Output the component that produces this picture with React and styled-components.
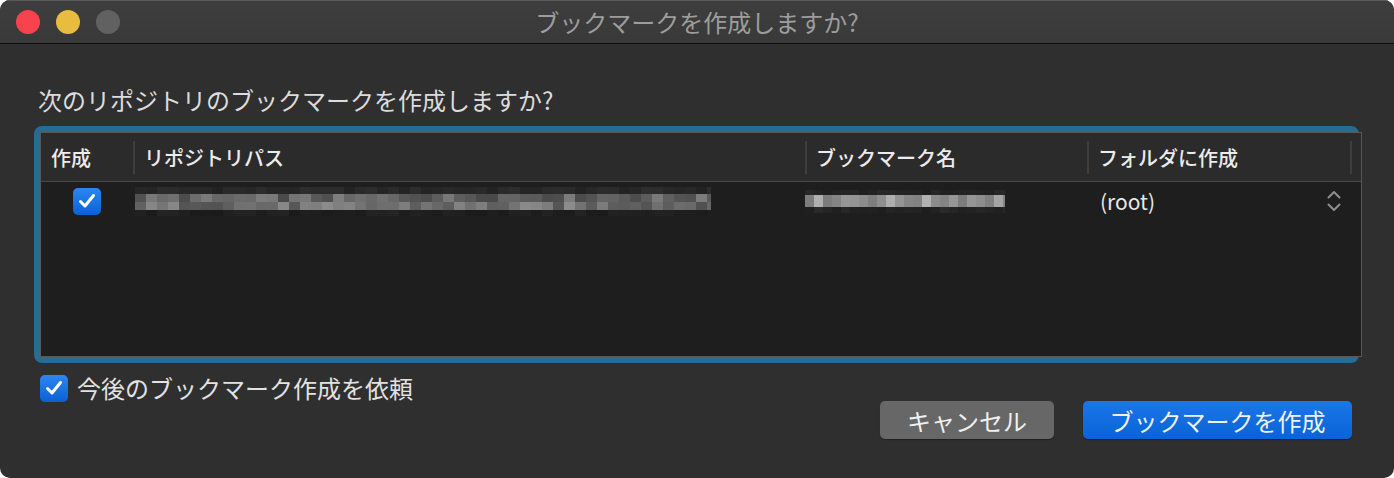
import React from "react";
import styled, { createGlobalStyle } from "styled-components";

const Global = createGlobalStyle`
  html, body { margin: 0; padding: 0; background: #ffffff; }
  body { font-family: "Noto Sans CJK JP", "Noto Sans", sans-serif; }
`;

const Window = styled.div`
  width: 1394px;
  height: 478px;
  border-radius: 10px;
  overflow: hidden;
  background: #2f2f2f;
  display: flex;
  flex-direction: column;
  box-sizing: border-box;
`;

const TitleBar = styled.div`
  height: 43px;
  flex: none;
  display: grid;
  grid-template-columns: 1fr auto 1fr;
  align-items: center;
  background: linear-gradient(#3e3e3e, #393939);
  border-bottom: 1px solid #0c0c0c;
  box-shadow: inset 0 1px 0 #5a5a5a;
`;

const Lights = styled.div`
  display: flex;
  gap: 16px;
  padding-left: 16px;
`;

const Light = styled.span`
  width: 24px;
  height: 24px;
  border-radius: 50%;
  background: ${(p) => p.color};
`;

const Title = styled.div`
  font-size: 24px;
  line-height: 43px;
  color: #9d9d9d;
`;

const Content = styled.div`
  padding: 42px 35px 0 34px;
  display: flex;
  flex-direction: column;
`;

const Prompt = styled.div`
  font-size: 24px;
  line-height: 28px;
  color: #dcdcdc;
  padding-left: 4px;
`;

const Frame = styled.div`
  margin-top: 12px;
  height: 237px;
  box-sizing: border-box;
  border: 6px solid #286b94;
  border-radius: 8px;
  display: flex;
`;

const Table = styled.div`
  flex: 1;
  border: 1px solid #575757;
  background: #1e1e1e;
  display: flex;
  flex-direction: column;
`;

const cols = "92px 672px 282px 263px 1fr";

const HeaderRow = styled.div`
  display: grid;
  grid-template-columns: ${cols};
  align-items: center;
  height: 48px;
  background: #2b2b2b;
  border-bottom: 1px solid #484848;
`;

const HeaderCell = styled.div`
  height: 33px;
  line-height: 33px;
  font-size: 20px;
  font-weight: 500;
  color: #ececec;
  padding-left: ${(p) => (p.first ? "10px" : "9px")};
  border-left: ${(p) => (p.first ? "none" : "2px solid #3e3e3e")};
  white-space: nowrap;
`;

const Row = styled.div`
  display: grid;
  grid-template-columns: ${cols};
  align-items: center;
  height: 38px;
`;

const Cell = styled.div`
  display: flex;
  align-items: center;
  justify-content: ${(p) => p.justify || "flex-start"};
  padding-left: ${(p) => p.pad || "0px"};
  padding-right: ${(p) => p.padRight || "0px"};
`;

const Box = styled.span`
  width: 28px;
  height: 27px;
  border-radius: 5px;
  background: linear-gradient(#2d86f6, #0a62d2);
  display: flex;
  align-items: center;
  justify-content: center;
  flex: none;
`;

const Folder = styled.div`
  flex: 1;
  display: flex;
  align-items: center;
  justify-content: space-between;
  font-size: 21px;
  color: #e8e8e8;
`;

const Footer = styled.div`
  margin-top: 11px;
  display: flex;
  justify-content: space-between;
  align-items: flex-start;
`;

const Remember = styled.label`
  display: flex;
  align-items: center;
  gap: 9px;
  padding-left: 6px;
  font-size: 24px;
  color: #e2e2e2;
  line-height: 28px;
`;

const Buttons = styled.div`
  margin-top: 27px;
  margin-right: 7px;
  display: flex;
  gap: 29px;
`;

const Button = styled.button`
  height: 38px;
  width: ${(p) => p.w}px;
  border: none;
  border-radius: 5px;
  font-family: inherit;
  font-size: 24px;
  padding: 0;
  color: #f0f0f0;
  background: ${(p) =>
    p.primary ? "linear-gradient(#1c76ea, #0863d6)" : "#676767"};
  box-shadow: 0 1px 1px rgba(0, 0, 0, 0.35);
`;

function Check() {
  return (
    <Box>
      <svg width="18" height="16" viewBox="0 0 18 16">
        <path
          d="M2.5 8.5 L7 13 L15.5 2.5"
          fill="none"
          stroke="#ffffff"
          strokeWidth="3"
          strokeLinecap="round"
          strokeLinejoin="round"
        />
      </svg>
    </Box>
  );
}

function rand(seed) {
  const x = Math.sin(seed * 12.9898 + 78.233) * 43758.5453;
  return x - Math.floor(x);
}

// pixelated (blurred) text
function Mosaic({ width, seed, rows, cw = 10 }) {
  const n = Math.ceil(width / cw);
  let y = 0;
  const rects = [];
  rows.forEach(([h, lo, hi], r) => {
    for (let i = 0; i < n; i++) {
      const v = Math.round(lo + (hi - lo) * rand(seed + r * 101 + i));
      rects.push(
        <rect
          key={r + "-" + i}
          x={i * cw}
          y={y}
          width={cw}
          height={h}
          fill={`rgb(${v},${v},${v})`}
        />
      );
    }
    y += h;
  });
  return (
    <svg width={width} height={y} viewBox={`0 0 ${width} ${y}`}>
      {rects}
    </svg>
  );
}

function Chevrons() {
  return (
    <svg width="16" height="24" viewBox="0 0 16 24">
      <path
        d="M2.5 8.5 L8 3 L13.5 8.5 M2.5 15.5 L8 21 L13.5 15.5"
        fill="none"
        stroke="#8e8e8e"
        strokeWidth="2"
        strokeLinecap="round"
        strokeLinejoin="round"
      />
    </svg>
  );
}

export default function App() {
  return (
    <>
      <Global />
      <Window>
        <TitleBar>
          <Lights>
            <Light color="#f8434f" />
            <Light color="#e8bc3f" />
            <Light color="#616161" />
          </Lights>
          <Title>ブックマークを作成しますか?</Title>
          <div />
        </TitleBar>
        <Content>
          <Prompt>次のリポジトリのブックマークを作成しますか?</Prompt>
          <Frame>
            <Table>
              <HeaderRow>
                <HeaderCell first>作成</HeaderCell>
                <HeaderCell>リポジトリパス</HeaderCell>
                <HeaderCell>ブックマーク名</HeaderCell>
                <HeaderCell>フォルダに作成</HeaderCell>
                <HeaderCell />
              </HeaderRow>
              <Row>
                <Cell justify="center">
                  <Check />
                </Cell>
                <Cell pad="2px">
                  <Mosaic
                    width={576}
                    seed={3}
                    cw={11}
                    rows={[
                      [7, 34, 46],
                      [8, 72, 125],
                      [8, 80, 140],
                      [6, 26, 36],
                    ]}
                  />
                </Cell>
                <Cell>
                  <Mosaic
                    width={200}
                    seed={41}
                    cw={9}
                    rows={[
                      [5, 30, 40],
                      [12, 120, 178],
                      [6, 30, 42],
                    ]}
                  />
                </Cell>
                <Cell pad="13px" padRight="8px">
                  <Folder>
                    <span>(root)</span>
                    <Chevrons />
                  </Folder>
                </Cell>
                <Cell />
              </Row>
            </Table>
          </Frame>
          <Footer>
            <Remember>
              <Check />
              今後のブックマーク作成を依頼
            </Remember>
            <Buttons>
              <Button w={174}>キャンセル</Button>
              <Button w={269} primary>
                ブックマークを作成
              </Button>
            </Buttons>
          </Footer>
        </Content>
      </Window>
    </>
  );
}
